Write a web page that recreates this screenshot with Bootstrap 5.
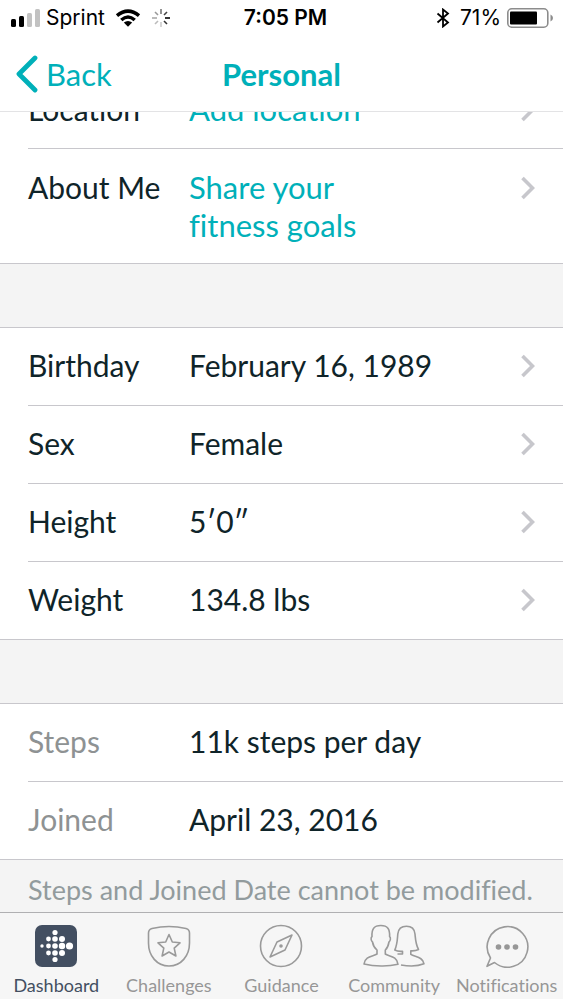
<!DOCTYPE html>
<html lang="en">
<head>
<meta charset="utf-8">
<meta name="viewport" content="width=device-width, initial-scale=1">
<title>Personal</title>
<link href="https://cdn.jsdelivr.net/npm/bootstrap@5.3.0/dist/css/bootstrap.min.css" rel="stylesheet">
<style>
:root { --teal: #00b0b9; --ink: #0f2429; --rule: #c8c7cc; --panel: #f4f4f4; }
body { font-family: Lato, "Open Sans", sans-serif; font-variant-ligatures: none; color: var(--ink); background: var(--panel); }
svg { display: block; flex-shrink: 0; }
.three-col { display: grid; grid-template-columns: 1fr auto 1fr; align-items: center; }
.top-header { background: #fff; border-bottom: 1px solid #e3e3e5; }
.status-bar { height: 36px; padding: 0 10px; font: 400 21px/36px Inter, "Liberation Sans", sans-serif; color: #000; }
.status-bar strong { font-weight: 600; }
.status-group { gap: 6px; }
.title-bar { height: 75px; padding: 0 16px; color: var(--teal); font-size: 31px; line-height: 38px; }
.title-bar a { color: var(--teal); }
.title-bar h1 { font-size: 31px; line-height: 38px; font-weight: 700; }
.profile { padding-top: 71px; font-size: 30px; line-height: 38px; }
.rows { background: #fff; border-bottom: 1px solid var(--rule); padding-left: 28px; }
.rows + .rows { margin-top: 63px; border-top: 1px solid var(--rule); }
.field-row { padding: 18px 28px 21px 0; color: var(--ink); text-decoration: none; }
.field-row + .field-row { border-top: 1px solid var(--rule); }
.prompts .field-row { padding-top: 19px; padding-bottom: 20px; }
.prompts .field-row:last-child { padding-bottom: 19px; }
.field-name { width: 161px; flex-shrink: 0; }
.field-prompt { color: var(--teal); font-size: 31px; max-width: 200px; }
.dim { color: #8e9293; }
.footnote { padding: 11px 28px 15px; font-size: 27px; line-height: 38px; color: #929b9d; }
.tab-bar { background: #f6f6f6; border-top: 1px solid #b0b0b2; }
.tab-link { color: #979797; font-size: 18px; line-height: 24px; padding: 11px 0 2px; text-decoration: none; }
.tab-link.active { color: #434f61; }
.tab-link svg { fill: none; stroke: #9a9a9a; stroke-width: 1.6; stroke-linejoin: round; margin-bottom: 5px; }
</style>
<script src="https://cdn.jsdelivr.net/npm/bootstrap@5.3.0/dist/js/bootstrap.bundle.min.js"></script>
</head>
<body>
<svg width="0" height="0" class="position-absolute" aria-hidden="true">
  <symbol id="chevron" viewBox="0 0 14 24"><path d="M1.500 2 11.500 12 1.500 22" fill="none" stroke="#c7c7cc" stroke-width="3.600"/></symbol>
</svg>

<header class="top-header fixed-top">
  <div class="status-bar three-col">
    <div class="status-group d-flex align-items-center">
      <svg width="30" height="18" viewBox="0 0 30 18" role="img" aria-label="Signal"><rect x="1" y="10" width="5" height="8" rx="1.5"/><rect x="9" y="7" width="5" height="11" rx="1.5"/><rect x="17" y="4" width="5" height="14" rx="1.5" fill="#c2c2c2"/><rect x="25" y="0" width="5" height="18" rx="1.5" fill="#c2c2c2"/></svg>
      <span>Sprint</span>
      <svg class="ms-1" width="26" height="18" viewBox="1 0 26 18" role="img" aria-label="Wi-Fi"><path d="M3 6.700Q14-2.500 25 6.700M7.300 11Q14 5 20.700 11" fill="none" stroke="#000" stroke-width="3.500"/><path d="M14 17.800 9.800 13.600Q14 10.200 18.200 13.600Z"/></svg>
      <svg class="ms-1" width="20" height="20" viewBox="-10 -10 20 20" role="img" aria-label="Loading" stroke-width="1.600"><path d="M0-4V-9" stroke="#777"/><path d="M3-3 6-6" stroke="#444"/><path d="M4 0H9" stroke="#000"/><path d="M3 3 6 6" stroke="#333"/><path d="M0 4V9" stroke="#ccc"/><path d="M-3 3-6 6" stroke="#bbb"/><path d="M-4 0H-9" stroke="#aaa"/><path d="M-3-3-6-6" stroke="#999"/></svg>
    </div>
    <strong class="ms-2">7:05 PM</strong>
    <div class="status-group d-flex align-items-center justify-content-end">
      <svg class="me-1" width="14" height="20" viewBox="0 0 14 20" role="img" aria-label="Bluetooth"><path d="M1.500 5.500 12 14.500 7 18.500V1.500L12 5.500 1.500 14.500" fill="none" stroke="#000" stroke-width="1.800"/></svg>
      <span>71%</span>
      <svg width="46" height="20" viewBox="0 0 46 20" role="img" aria-label="Battery"><rect x=".8" y=".8" width="40" height="18.400" rx="4" fill="#fff" stroke="#8c8c8c" stroke-width="1.600"/><rect x="3" y="3.500" width="27" height="13" rx="1"/><path d="M43.500 6.500Q46 7.500 46 10T43.500 13.500Z" fill="#8c8c8c"/></svg>
    </div>
  </div>
  <nav class="title-bar three-col" aria-label="Page">
    <a href="#" class="d-flex align-items-center text-decoration-none">
      <svg width="22" height="38" viewBox="0 0 22 38"><path d="M19 3 3 19 19 35" fill="none" stroke="#00b0b9" stroke-width="4.800" stroke-linecap="round" stroke-linejoin="round"/></svg>
      <span class="ms-2">Back</span>
    </a>
    <h1 class="m-0">Personal</h1>
  </nav>
</header>

<main class="profile">
  <section class="rows prompts">
    <a href="#" class="field-row d-flex align-items-start"><span class="field-name">Location</span><span class="field-prompt">Add location</span><svg class="ms-auto mt-2" width="14" height="24"><use href="#chevron"/></svg></a>
    <a href="#" class="field-row d-flex align-items-start"><span class="field-name">About Me</span><span class="field-prompt">Share your fitness goals</span><svg class="ms-auto mt-2" width="14" height="24"><use href="#chevron"/></svg></a>
  </section>
  <section class="rows">
    <a href="#" class="field-row d-flex align-items-start"><span class="field-name">Birthday</span><span>February 16, 1989</span><svg class="ms-auto mt-2" width="14" height="24"><use href="#chevron"/></svg></a>
    <a href="#" class="field-row d-flex align-items-start"><span class="field-name">Sex</span><span>Female</span><svg class="ms-auto mt-2" width="14" height="24"><use href="#chevron"/></svg></a>
    <a href="#" class="field-row d-flex align-items-start"><span class="field-name">Height</span><span>5′0″</span><svg class="ms-auto mt-2" width="14" height="24"><use href="#chevron"/></svg></a>
    <a href="#" class="field-row d-flex align-items-start"><span class="field-name">Weight</span><span>134.8 lbs</span><svg class="ms-auto mt-2" width="14" height="24"><use href="#chevron"/></svg></a>
  </section>
  <section class="rows">
    <div class="field-row d-flex"><span class="field-name dim">Steps</span><span>11k steps per day</span></div>
    <div class="field-row d-flex"><span class="field-name dim">Joined</span><span>April 23, 2016</span></div>
  </section>
  <p class="footnote m-0 text-nowrap">Steps and Joined Date cannot be modified.</p>
</main>

<nav class="tab-bar fixed-bottom row row-cols-5 g-0" aria-label="Main">
  <a href="#" class="tab-link active col d-flex flex-column align-items-center" aria-current="page">
    <svg width="44" height="44" viewBox="0 0 44 44"><g stroke="none"><rect x="1" y="1" width="42" height="42" rx="7" fill="#434f61"/><g fill="#fff"><circle cx="8" cy="22" r="1.700"/><circle cx="14.500" cy="15" r="2.400"/><circle cx="14.500" cy="22" r="2.400"/><circle cx="14.500" cy="29" r="2.400"/><circle cx="21" cy="8.500" r="2.600"/><circle cx="21" cy="15" r="2.800"/><circle cx="21" cy="22" r="2.800"/><circle cx="21" cy="29" r="2.800"/><circle cx="21" cy="35.500" r="2.600"/><circle cx="28" cy="15" r="3"/><circle cx="28" cy="22" r="3.200"/><circle cx="28" cy="29" r="3"/><circle cx="35.500" cy="22" r="3.600"/></g></g></svg>
    <span>Dashboard</span>
  </a>
  <a href="#" class="tab-link col d-flex flex-column align-items-center">
    <svg width="44" height="44" viewBox="0 0 44 44"><path d="M5 4.500Q22 .5 39 4.500Q42.500 5.500 42.500 9V19C42.500 32 34 42 22 42S1.500 32 1.500 19V9Q1.500 5.500 5 4.500Z"/><path d="M22 10.500 25.300 18 33 18.800 27.200 24.200 28.900 32 22 28 15.100 32 16.800 24.200 11 18.800 18.700 18Z"/></svg>
    <span>Challenges</span>
  </a>
  <a href="#" class="tab-link col d-flex flex-column align-items-center">
    <svg width="44" height="44" viewBox="0 0 44 44"><circle cx="22" cy="22" r="20.500"/><path d="M33 11 26 26 11 33 18 18Z"/><circle cx="22" cy="22" r="1.800" fill="#9a9a9a" stroke="none"/></svg>
    <span>Guidance</span>
  </a>
  <a href="#" class="tab-link col d-flex flex-column align-items-center">
    <svg width="62" height="44" viewBox="0 0 62 44"><path d="M14 30V26C11.500 24 10 21 9.500 18C8 17 7.500 13.500 9 12.500C8.500 5 11 1.500 17.800 1.500S27 5 26.600 12.500C28 13.500 27.500 17 26 18C25.500 21 24.500 24 22.300 26V30C26 32.500 34 32 35 40.300Q27 42.200 18 42T1 40C2 32 10 32.500 14 30Z"/><path d="M34.500 30H39.500V27.300C36.500 27.500 34 27.300 31.800 26C34.500 20 34.300 15 34.800 10C35.300 5 38 2.300 43.500 2.300S51.500 5 52 10C52.500 15 52.500 20 55.500 25.500C53 26.800 50.500 27 47.800 26.800V30.300C52 33 60 33 61 39.800Q52 43.500 38 41"/></svg>
    <span>Community</span>
  </a>
  <a href="#" class="tab-link col d-flex flex-column align-items-center">
    <svg width="44" height="44" viewBox="0 0 44 44"><path d="M5.500 34A20.300 20.300 0 1 1 9.500 38.500L2 42.300Z"/><g fill="#979797" stroke="none"><circle cx="13.500" cy="23" r="2.800"/><circle cx="22" cy="23" r="2.800"/><circle cx="30.500" cy="23" r="2.800"/></g></svg>
    <span>Notifications</span>
  </a>
</nav>
</body>
</html>
